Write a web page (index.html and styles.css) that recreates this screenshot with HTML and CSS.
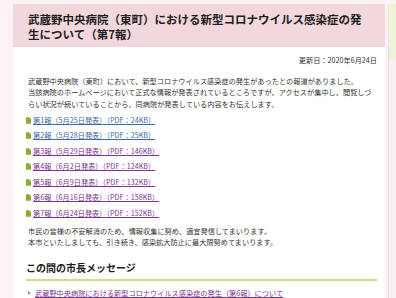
FILE: index.html
```html
<!DOCTYPE html>
<html lang="ja">
<head>
<meta charset="utf-8">
<title>武蔵野中央病院（東町）における新型コロナウイルス感染症の発生について（第7報）</title>
<link rel="stylesheet" href="styles.css">
</head>
<body>
<div class="page">
  <main class="main">
    <h1 class="title">武蔵野中央病院（東町）における新型コロナウイルス感染症の発生について（第7報）</h1>
    <div class="content">
      <p class="updated">更新日：2020年6月24日</p>
      <p class="lead">武蔵野中央病院（東町）において、新型コロナウイルス感染症の発生があったとの報道がありました。<br>当該病院のホームページにおいて正式な情報が発表されているところですが、アクセスが集中し、閲覧しづらい状況が続いていることから、同病院が発表している内容をお伝えします。</p>
      <ul class="files">
        <li><svg class="doc" viewBox="0 0 6 8"><path d="M0 0H4L6 2V8H0Z" fill="#86ad2e"/><path d="M4 0V2H6Z" fill="#cfe39a"/></svg><a class="new" href="#">第1報（5月25日発表）（PDF：24KB）</a></li>
        <li><svg class="doc" viewBox="0 0 6 8"><path d="M0 0H4L6 2V8H0Z" fill="#86ad2e"/><path d="M4 0V2H6Z" fill="#cfe39a"/></svg><a class="new" href="#">第2報（5月28日発表）（PDF：25KB）</a></li>
        <li><svg class="doc" viewBox="0 0 6 8"><path d="M0 0H4L6 2V8H0Z" fill="#86ad2e"/><path d="M4 0V2H6Z" fill="#cfe39a"/></svg><a href="#">第3報（5月29日発表）（PDF：146KB）</a></li>
        <li><svg class="doc" viewBox="0 0 6 8"><path d="M0 0H4L6 2V8H0Z" fill="#86ad2e"/><path d="M4 0V2H6Z" fill="#cfe39a"/></svg><a href="#">第4報（6月2日発表）（PDF：124KB）</a></li>
        <li><svg class="doc" viewBox="0 0 6 8"><path d="M0 0H4L6 2V8H0Z" fill="#86ad2e"/><path d="M4 0V2H6Z" fill="#cfe39a"/></svg><a href="#">第5報（6月9日発表）（PDF：132KB）</a></li>
        <li><svg class="doc" viewBox="0 0 6 8"><path d="M0 0H4L6 2V8H0Z" fill="#86ad2e"/><path d="M4 0V2H6Z" fill="#cfe39a"/></svg><a href="#">第6報（6月16日発表）（PDF：158KB）</a></li>
        <li><svg class="doc" viewBox="0 0 6 8"><path d="M0 0H4L6 2V8H0Z" fill="#86ad2e"/><path d="M4 0V2H6Z" fill="#cfe39a"/></svg><a href="#">第7報（6月24日発表）（PDF：152KB）</a></li>
      </ul>
      <p class="note">市民の皆様の不安解消のため、情報収集に努め、適宜発信してまいります。<br>本市といたしましても、引き続き、感染拡大防止に最大限努めてまいります。</p>
      <h2 class="sub">この間の市長メッセージ</h2>
      <ul class="msgs">
        <li><span class="tri"></span><a href="#">武蔵野中央病院における新型コロナウイルス感染症の発生（第6報）について</a></li>
      </ul>
    </div>
  </main>
  <aside class="side"></aside>
</div>
</body>
</html>
```
FILE: styles.css
```css
html, body {
  margin: 0;
  padding: 0;
}
body {
  background: #fcf1f5;
  font-family: "Noto Sans CJK JP", "Noto Sans", sans-serif;
  color: #333;
  overflow: hidden;
}
.page {
  display: flex;
  align-items: stretch;
  padding-top: 4px;
  min-height: 298px;
}
.main {
  margin-left: 13px;
  width: 372px;
  flex: none;
  background: #fff;
}
.title {
  margin: 0;
  background: #f2d8dd;
  color: #1e1e1e;
  font-size: 11.5px;
  line-height: 14.5px;
  font-weight: bold;
  padding: 8px 19px 6px 15px;
}
.content {
  padding: 0 8px 0 15px;
  font-size: 7.2px;
  line-height: 11.5px;
}
.updated {
  margin: 8px 0 0;
  text-align: right;
}
.lead {
  margin: 9px 0 0;
}
.files {
  list-style: none;
  margin: 2.5px 0 0;
  padding: 0;
}
.files li {
  display: flex;
  align-items: center;
  height: 15.5px;
  margin-left: -2px;
}
.doc {
  width: 5px;
  height: 7px;
  margin-right: 2px;
  flex: none;
}
a {
  color: #7e3590;
  text-decoration: underline;
}
a.new {
  color: #3d68a6;
}
.note {
  margin: 4.5px 0 0;
}
.sub {
  margin: 12px 0 0;
  font-size: 10px;
  line-height: 14px;
  font-weight: bold;
  color: #1e1e1e;
  padding-bottom: 4px;
  margin-left: -2px;
  border-bottom: 2px solid #cbe08e;
}
.msgs {
  list-style: none;
  margin: 7px 0 0;
  padding: 0;
}
.msgs li {
  display: flex;
  align-items: center;
}
.tri {
  width: 0;
  height: 0;
  border-left: 3px solid #999;
  border-top: 2px solid transparent;
  border-bottom: 2px solid transparent;
  margin-right: 4px;
}
.side {
  margin-left: 3px;
  flex: 1;
  border-left: 1px solid #e8dfe2;
  background: linear-gradient(#eef4dc 0, #eef4dc 56px, #fbeff3 56px);
}
```
